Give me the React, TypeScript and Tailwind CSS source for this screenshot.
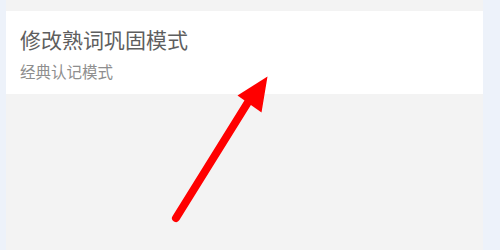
export default function App() {
  return (
    <div
      className="relative flex h-[250px] w-[500px] overflow-hidden"
      style={{ fontFamily: '"Noto Sans CJK SC", "Noto Sans", sans-serif' }}
    >
      <div className="w-[6px] shrink-0 bg-[#edf2fa]" />
      <div className="flex flex-1 flex-col bg-[#f3f3f3] pt-[11px]">
        <div className="flex h-[83px] flex-col bg-white px-[14px] pt-[14px]">
          <div className="text-[21px] leading-[28px] text-[#5e5e5e]">修改熟词巩固模式</div>
          <div className="mt-[8px] text-[15.5px] leading-[20px] text-[#8e8e8e]">经典认记模式</div>
        </div>
      </div>
      <div className="w-[17px] shrink-0 bg-[#edf2fa]" />
      <svg className="pointer-events-none absolute left-0 top-0" width="500" height="250" viewBox="0 0 500 250">
        <line x1="176" y1="218" x2="250" y2="99" stroke="#ff0000" strokeWidth="8" strokeLinecap="round" />
        <polygon points="267.5,76.5 237.5,95.5 261.5,112.5" fill="#ff0000" />
      </svg>
    </div>
  );
}
